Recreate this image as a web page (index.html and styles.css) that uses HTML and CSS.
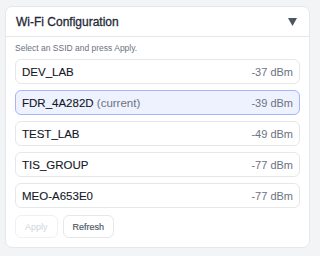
FILE: index.html
```html
<!DOCTYPE html>
<html>
<head>
<meta charset="utf-8">
<link rel="stylesheet" href="styles.css">
</head>
<body>
<div class="card">
  <div class="header">
    <span class="title">Wi-Fi Configuration</span>
    <svg class="caret" width="9" height="8" viewBox="0 0 9 8"><path d="M0 0 H9 L4.5 8 Z" fill="#4b5563"/></svg>
  </div>
  <div class="body">
    <div class="hint">Select an SSID and press Apply.</div>
    <div class="list">
      <div class="row"><span class="ssid">DEV_LAB</span><span class="rssi">-37 dBm</span></div>
      <div class="row selected"><span class="ssid">FDR_4A282D <span class="cur">(current)</span></span><span class="rssi">-39 dBm</span></div>
      <div class="row"><span class="ssid">TEST_LAB</span><span class="rssi">-49 dBm</span></div>
      <div class="row"><span class="ssid">TIS_GROUP</span><span class="rssi">-77 dBm</span></div>
      <div class="row"><span class="ssid">MEO-A653E0</span><span class="rssi">-77 dBm</span></div>
    </div>
    <div class="actions">
      <button class="btn disabled">Apply</button>
      <button class="btn">Refresh</button>
    </div>
  </div>
</div>
</body>
</html>
```
FILE: styles.css
```css
html, body {
  margin: 0;
  padding: 0;
  background: #f3f4f6;
  font-family: "Liberation Sans", Arial, sans-serif;
}
body {
  padding: 6px 10px 0 5px;
}
.card {
  width: 305px;
  height: 242px;
  box-sizing: border-box;
  background: #fff;
  border: 1px solid #e5e7eb;
  border-radius: 7px;
  display: flex;
  flex-direction: column;
}
.header {
  height: 30px;
  box-sizing: border-box;
  border-bottom: 1px solid #e5e7eb;
  display: flex;
  align-items: center;
  justify-content: space-between;
  padding: 1px 12px 0 10px;
}
.title {
  font-size: 12px;
  color: #1f2937;
  -webkit-text-stroke: 0.3px #1f2937;
}
.caret {
  display: block;
}
.body {
  padding: 6px 9px 0 9px;
}
.hint {
  font-size: 8.5px;
  color: #6b7280;
  margin-bottom: 6px;
}
.list {
  display: flex;
  flex-direction: column;
  gap: 6px;
}
.row {
  height: 25px;
  box-sizing: border-box;
  border: 1px solid #e5e7eb;
  border-radius: 6px;
  display: flex;
  align-items: center;
  justify-content: space-between;
  padding: 0 6px 0 6px;
}
.row.selected {
  border-color: #a5b4fc;
  background: #eef2ff;
}
.ssid {
  font-size: 11.5px;
  color: #111827;
  -webkit-text-stroke: 0.1px #111827;
}
.cur {
  color: #6b7280;
  -webkit-text-stroke: 0;
}
.rssi {
  font-size: 11px;
  color: #6b7280;
}
.actions {
  display: flex;
  gap: 5px;
  margin-top: 7px;
}
.btn {
  height: 23px;
  box-sizing: border-box;
  border: 1px solid #e5e7eb;
  border-radius: 6px;
  background: #fff;
  font-family: "Liberation Sans", Arial, sans-serif;
  font-size: 9px;
  color: #4b5563;
  -webkit-text-stroke: 0.15px #4b5563;
  padding: 0 9px;
}
.btn.disabled {
  color: #d1d5db;
  -webkit-text-stroke: 0;
  border-color: #eef0f3;
}
```
